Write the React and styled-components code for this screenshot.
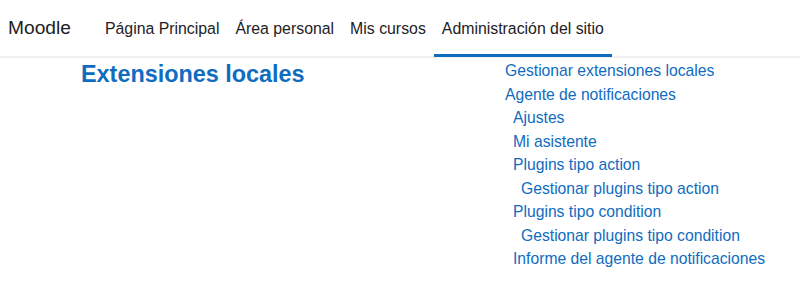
import styled, { createGlobalStyle } from "styled-components";

const GlobalStyle = createGlobalStyle`
  html, body {
    margin: 0;
    padding: 0;
    background: #fff;
    font-family: "Liberation Sans", Arial, sans-serif;
  }
`;

const Navbar = styled.nav`
  display: flex;
  align-items: stretch;
  height: 56px;
  padding-left: 8px;
  border-bottom: 2px solid #f0f0f0;
`;

const Brand = styled.div`
  display: flex;
  align-items: center;
  margin-right: 26px;
  font-size: 19.2px;
  color: #1d2125;
`;

const NavItem = styled.a`
  display: flex;
  align-items: center;
  padding: 3px 8px 0;
  font-size: 15.85px;
  color: #1d2125;
  text-decoration: none;
  border-bottom: 3px solid ${(p) => (p.$active ? "#0f6cbf" : "transparent")};
  margin-bottom: -1px;
`;

const Content = styled.main`
  display: grid;
  grid-template-columns: 424px 1fr;
  padding: 1px 0 0 81px;
`;

const Heading = styled.h2`
  margin: 0;
  font-size: 23.4px;
  font-weight: bold;
  color: #0f6cbf;
  line-height: 30px;
`;

const LinkList = styled.ul`
  list-style: none;
  margin: 0;
  padding: 0;
`;

const LinkItem = styled.li`
  padding-left: ${(p) => p.$level * 8}px;
  line-height: 23.5px;
  font-size: 15.7px;
`;

const Link = styled.a`
  color: #0f6cbf;
  text-decoration: none;
`;

const navLinks = [
  { label: "Página Principal" },
  { label: "Área personal" },
  { label: "Mis cursos" },
  { label: "Administración del sitio", active: true },
];

const pages = [
  { label: "Gestionar extensiones locales", level: 0 },
  { label: "Agente de notificaciones", level: 0 },
  { label: "Ajustes", level: 1 },
  { label: "Mi asistente", level: 1 },
  { label: "Plugins tipo action", level: 1 },
  { label: "Gestionar plugins tipo action", level: 2 },
  { label: "Plugins tipo condition", level: 1 },
  { label: "Gestionar plugins tipo condition", level: 2 },
  { label: "Informe del agente de notificaciones", level: 1 },
];

export default function App() {
  return (
    <>
      <GlobalStyle />
      <Navbar>
        <Brand>Moodle</Brand>
        {navLinks.map((item) => (
          <NavItem key={item.label} href="#" $active={item.active}>
            {item.label}
          </NavItem>
        ))}
      </Navbar>
      <Content>
        <Heading>Extensiones locales</Heading>
        <LinkList>
          {pages.map((item) => (
            <LinkItem key={item.label} $level={item.level}>
              <Link href="#">{item.label}</Link>
            </LinkItem>
          ))}
        </LinkList>
      </Content>
    </>
  );
}
